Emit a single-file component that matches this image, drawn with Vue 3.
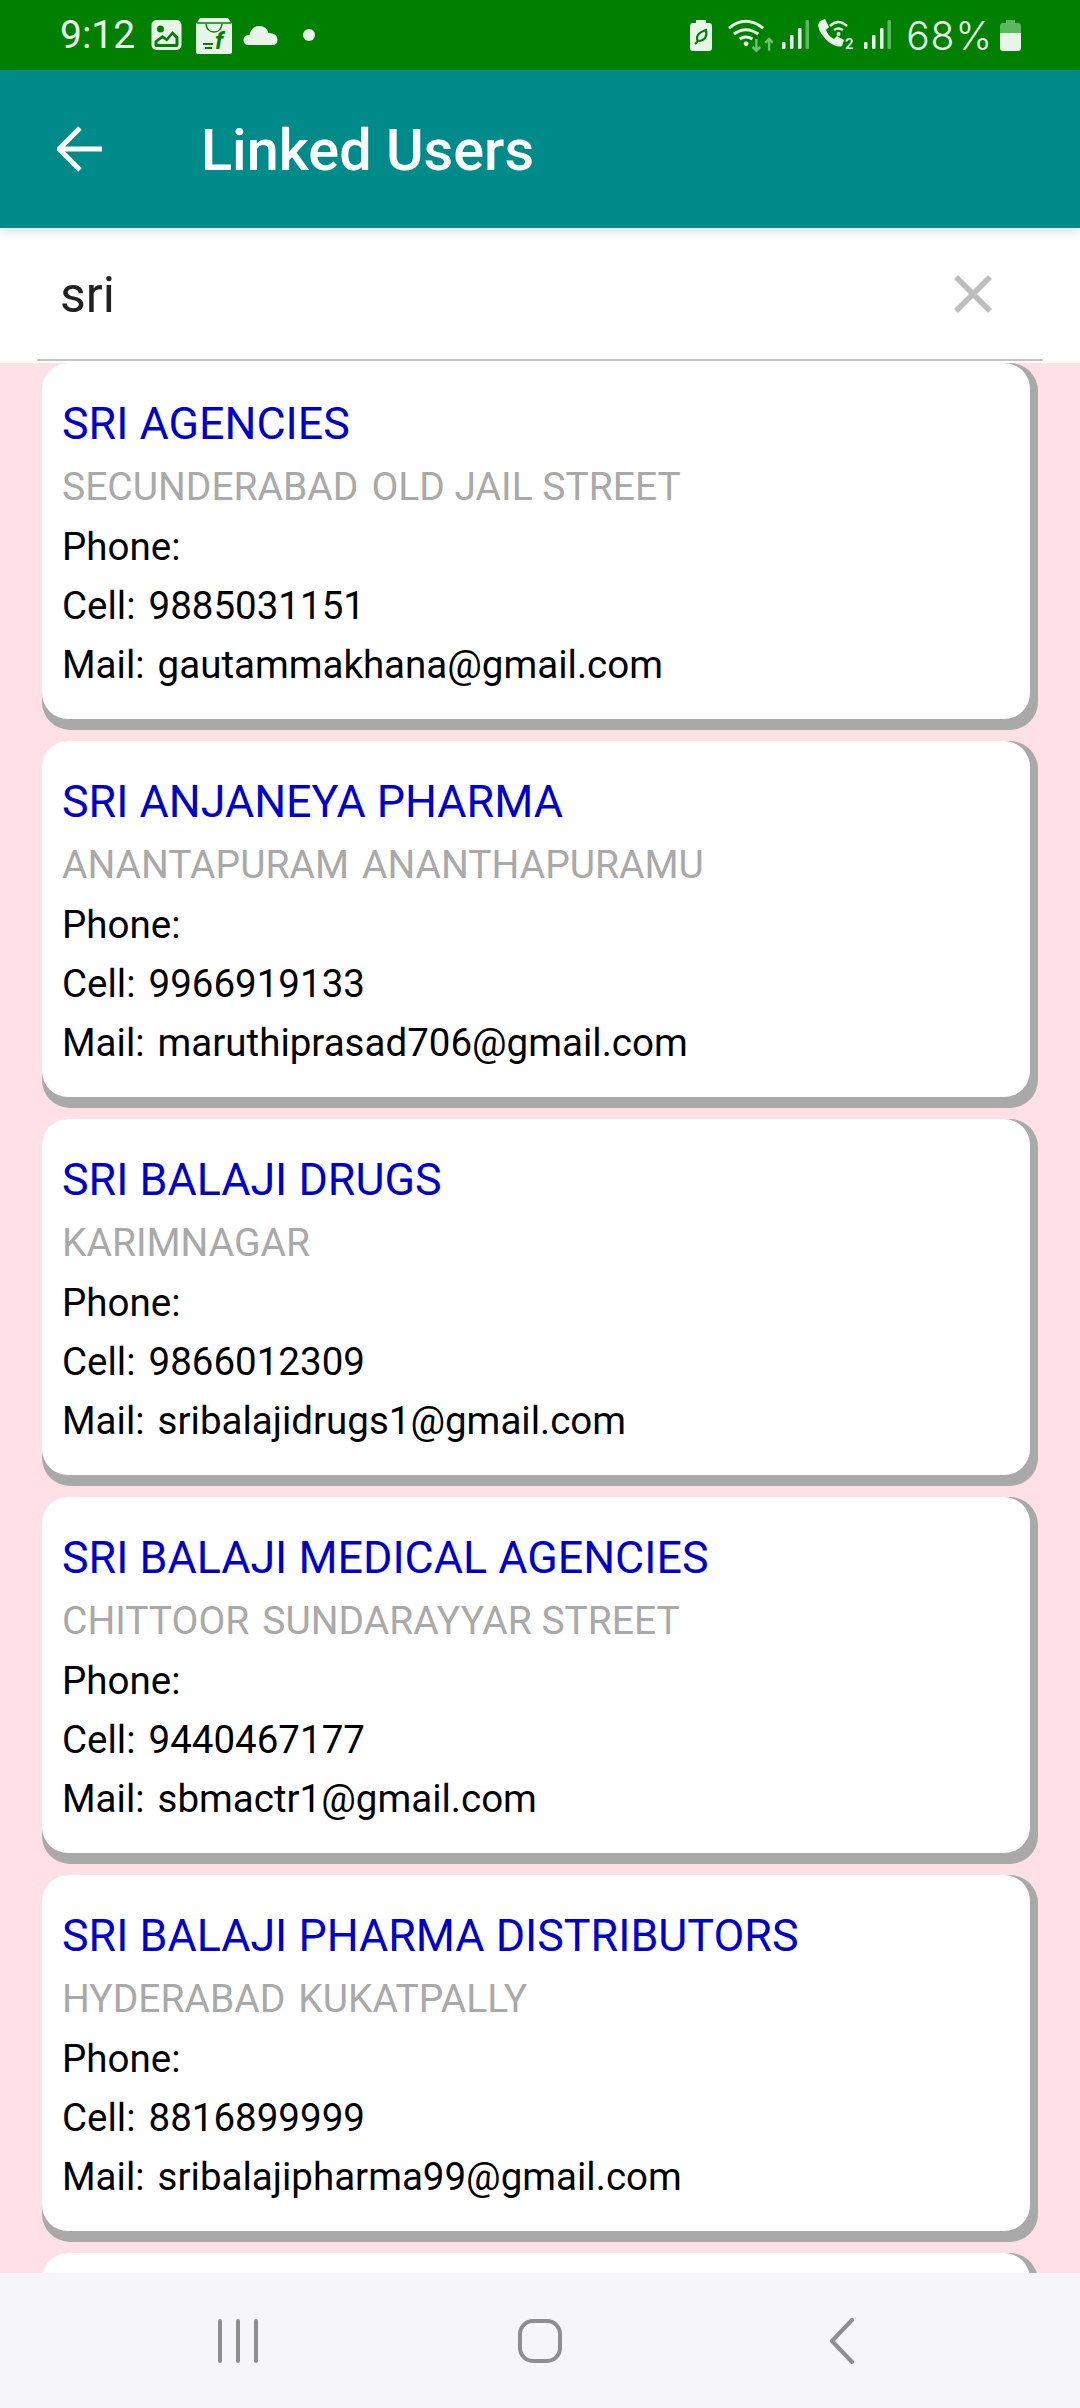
<template>
  <div class="screen">
    <div class="status-bar">
      <div class="status-left">
        <span class="clock">9:12</span>
        <svg width="31" height="30" viewBox="0 0 30 30">
          <rect width="30" height="30" rx="5" fill="#e8f5e9" />
          <path d="M3 25 V21 L11 15 L15 18 L21 11 L27 17 V25 Q27 27 25 27 H5 Q3 27 3 25 Z" fill="#008000" />
          <path d="M6 24 H24 V18.5 L21 15 L15.5 21.5 L11 18.5 L6 22 Z" fill="#e8f5e9" />
          <circle cx="9" cy="9" r="3.5" fill="#008000" />
        </svg>
        <svg class="ic-bag" width="36" height="37" viewBox="0 0 36 37">
          <path d="M4 1 H32 L36 7 V35 Q36 37 34 37 H2 Q0 37 0 35 V7 Z" fill="#e8f5e9" />
          <path d="M1 6 H35" stroke="#008000" stroke-width="1.500" />
          <path d="M10 7 Q11 15 18 15 Q25 15 26 7" fill="none" stroke="#008000" stroke-width="1.500" />
          <text x="19" y="32" class="bag-f">f</text>
          <path d="M7 27 H17 M9 31 H16" stroke="#008000" stroke-width="2" />
        </svg>
        <svg class="ic-cloud" width="35" height="19" viewBox="0 0 34 19">
          <path d="M5 19 Q0 19 0 14 Q0 9 6 9 Q8 0 16 0 Q23 0 25 7 Q34 7 34 14 Q34 19 29 19 Z" fill="#e8f5e9" />
        </svg>
        <span class="dot"></span>
      </div>
      <div class="status-right">
        <svg width="22" height="31" viewBox="0 0 22 31">
          <path d="M6 0 H16 V3 H19 Q22 3 22 6 V28 Q22 31 19 31 H3 Q0 31 0 28 V6 Q0 3 3 3 H6 Z" fill="#e8f5e9" />
          <path d="M5 24 L9 20 M8 22 Q4 14 16 10 Q18 20 9 21" fill="none" stroke="#008000" stroke-width="2.200" />
        </svg>
        <svg class="ic-wifi" width="45" height="34" viewBox="0 0 46 34">
          <path d="M1 9 Q18 -5 36 9 M6 15 Q18 6 31 15 M12 20 Q18 16 25 20" fill="none" stroke="#e8f5e9" stroke-width="3" />
          <circle cx="18.500" cy="25" r="2.500" fill="#e8f5e9" />
          <path d="M29 20 V32 M25 28 L29 32 L33 28 M42 32 V20 M38 24 L42 20 L46 24" fill="none" stroke="#6fbf73" stroke-width="2.500" />
        </svg>
        <svg class="ic-signal" width="27" height="30" viewBox="0 0 27 30">
          <rect x="0" y="22" width="3.500" height="7" rx="1" fill="#e8f5e9" />
          <rect x="8" y="15" width="3.500" height="14" rx="1" fill="#e8f5e9" />
          <rect x="16" y="8" width="3.500" height="21" rx="1" fill="#e8f5e9" />
          <rect x="23.500" y="0" width="3.500" height="29" rx="1" fill="#5cb860" />
        </svg>
        <svg class="ic-call" width="38" height="36" viewBox="0 0 38 36">
          <path d="M2 2 L7 0 L11 8 L8 11 Q10 17 16 20 L19 17 L26 21 L24 27 Q20 29 12 24 Q1 15 0 6 Z" fill="#e8f5e9" />
          <path d="M12 7 Q20 -1 29 7 M16 11 Q20 8 25 11" fill="none" stroke="#e8f5e9" stroke-width="2.500" />
          <circle cx="20.500" cy="15" r="2" fill="#e8f5e9" />
          <text x="27" y="30" class="sim-no">2</text>
        </svg>
        <svg class="ic-signal2" width="27" height="30" viewBox="0 0 27 30">
          <rect x="0" y="22" width="3.500" height="7" rx="1" fill="#e8f5e9" />
          <rect x="8" y="15" width="3.500" height="14" rx="1" fill="#e8f5e9" />
          <rect x="16" y="8" width="3.500" height="21" rx="1" fill="#e8f5e9" />
          <rect x="23.500" y="0" width="3.500" height="29" rx="1" fill="#5cb860" />
        </svg>
        <span class="percent">68%</span>
        <svg class="ic-batt" width="21" height="31" viewBox="0 0 21 31">
          <path d="M6 0 H15 V3 H18 Q21 3 21 6 V13 H0 V6 Q0 3 3 3 H6 Z" fill="#5cb860" />
          <path d="M0 13 H21 V28 Q21 31 18 31 H3 Q0 31 0 28 Z" fill="#e8f5e9" />
        </svg>
      </div>
    </div>

    <header class="app-bar">
      <svg width="46" height="46" viewBox="0 0 46 46">
        <path d="M45 23 H4 M23 2 L2 23 L23 44" fill="none" stroke="#fff" stroke-width="5" />
      </svg>
      <h1>Linked Users</h1>
    </header>

    <div class="search">
      <div class="search-line">
        <input v-model="query" type="text" />
        <svg width="40" height="40" viewBox="0 0 40 40">
          <path d="M3 3 L37 37 M37 3 L3 37" stroke="#bdbdbd" stroke-width="5.500" />
        </svg>
      </div>
    </div>

    <div class="list">
      <div v-for="u in users" :key="u.name" class="card">
        <div class="card-body">
          <div class="name">{{ u.name }}</div>
          <div class="place">
            <span v-for="p in u.place" :key="p">{{ p }}</span>
          </div>
          <div class="row"><span>Phone:</span></div>
          <div class="row"><span>Cell:</span><span>{{ u.cell }}</span></div>
          <div class="row"><span>Mail:</span><span>{{ u.mail }}</span></div>
        </div>
      </div>
      <!-- next card, cut off by the nav bar -->
      <div class="card"><div class="card-body"></div></div>
    </div>

    <div class="nav-bar">
      <svg width="40" height="44" viewBox="0 0 40 44">
        <path d="M2 2 V42 M20 2 V42 M38 2 V42" stroke="#8e8e8e" stroke-width="4" stroke-linecap="round" />
      </svg>
      <svg width="44" height="44" viewBox="0 0 44 44">
        <rect x="2" y="2" width="40" height="40" rx="13" fill="none" stroke="#8e8e8e" stroke-width="4" />
      </svg>
      <svg width="26" height="46" viewBox="0 0 26 46">
        <path d="M23 2 L3 23 L23 44" fill="none" stroke="#8e8e8e" stroke-width="4" stroke-linecap="round" stroke-linejoin="round" />
      </svg>
    </div>
  </div>
</template>

<script setup>
import { ref } from 'vue';

const query = ref('sri');

const users = [
  { name: 'SRI AGENCIES', place: ['SECUNDERABAD', 'OLD JAIL STREET'], cell: '9885031151', mail: 'gautammakhana@gmail.com' },
  { name: 'SRI ANJANEYA PHARMA', place: ['ANANTAPURAM', 'ANANTHAPURAMU'], cell: '9966919133', mail: 'maruthiprasad706@gmail.com' },
  { name: 'SRI BALAJI DRUGS', place: ['KARIMNAGAR'], cell: '9866012309', mail: 'sribalajidrugs1@gmail.com' },
  { name: 'SRI BALAJI MEDICAL AGENCIES', place: ['CHITTOOR', 'SUNDARAYYAR STREET'], cell: '9440467177', mail: 'sbmactr1@gmail.com' },
  { name: 'SRI BALAJI PHARMA DISTRIBUTORS', place: ['HYDERABAD', 'KUKATPALLY'], cell: '8816899999', mail: 'sribalajipharma99@gmail.com' }
];
</script>

<style>
html, body { margin: 0; background: #ffe0e6; }
</style>

<style scoped>
.screen {
  width: 1080px;
  height: 2408px;
  display: flex;
  flex-direction: column;
  overflow: hidden;
  font-family: Roboto, "Liberation Sans", sans-serif;
  background: #ffe0e6;
}

.status-bar {
  height: 70px;
  flex-shrink: 0;
  display: flex;
  justify-content: space-between;
  align-items: center;
  padding: 0 59px 0 60px;
  background: #008000;
  color: #e8f5e9;
  font-size: 39px;
}
.status-left, .status-right { display: flex; align-items: center; }
.clock { width: 91px; }
.ic-bag { margin-left: 14px; }
.ic-cloud { margin-left: 11px; }
.dot { width: 12px; height: 12px; border-radius: 50%; background: #e8f5e9; margin-left: 25px; }
.bag-f { font: italic 700 24px Roboto, sans-serif; fill: #008000; }
.sim-no { font: 500 15px Roboto, sans-serif; fill: #e8f5e9; }
.ic-wifi { margin-left: 16px; margin-top: 2px; }
.ic-signal { margin-left: 9px; }
.ic-call { margin-left: 9px; margin-top: 4px; }
.ic-signal2 { margin-left: 8px; }
.percent { margin-left: 15px; font-family: Inter, Roboto, sans-serif; font-size: 39px; font-weight: 300; letter-spacing: 1px; }
.ic-batt { margin-left: 7px; }

.app-bar {
  height: 158px;
  flex-shrink: 0;
  display: flex;
  align-items: center;
  padding-left: 57px;
  background: #008b8b;
  box-shadow: 0 4px 10px rgba(0, 0, 0, 0.12);
  position: relative;
  z-index: 2;
}
.app-bar h1 {
  margin: 2px 0 0 98px;
  font-size: 57.6px;
  font-weight: 500;
  color: #fff;
}

.search {
  height: 135px;
  flex-shrink: 0;
  padding: 0 37px;
  background: #fff;
  box-sizing: border-box;
}
.search-line {
  height: 133px;
  display: flex;
  align-items: center;
  justify-content: space-between;
  padding: 0 50px 0 23px;
  border-bottom: 2px solid #c4c4c4;
  box-sizing: border-box;
}
.search-line input {
  flex: 1;
  border: none;
  outline: none;
  padding: 2px 0 0;
  font-family: inherit;
  font-size: 50px;
  color: #212121;
  background: transparent;
}

.list {
  flex: 1;
  min-height: 0;
  overflow: hidden;
  padding: 0 42px;
  display: flex;
  flex-direction: column;
  gap: 11px;
}
.card {
  flex-shrink: 0;
  padding: 0 8px 11px 0;
  background: #a9a9a9;
  border-radius: 28px;
}
.card-body {
  height: 356px;
  box-sizing: border-box;
  padding: 27px 20px 0;
  background: #fff;
  border-radius: 26px;
}
.name { height: 68px; line-height: 67px; font-size: 44.8px; color: #0000cd; }
.place, .row {
  display: flex;
  gap: 13px;
  height: 59px;
  line-height: 59px;
  font-size: 38.5px;
}
.place { font-size: 39px; color: #a9a9a9; }
.row { color: #000; }

.nav-bar {
  height: 135px;
  flex-shrink: 0;
  display: grid;
  grid-template-columns: repeat(3, 302px);
  justify-content: center;
  justify-items: center;
  align-items: center;
  background: #f6f6f8;
  position: relative;
  z-index: 2;
}
</style>
